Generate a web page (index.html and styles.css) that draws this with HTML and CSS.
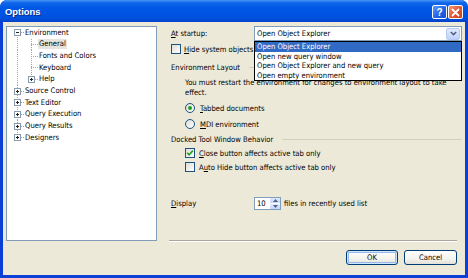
FILE: index.html
```html
<!DOCTYPE html>
<html>
<head>
<meta charset="utf-8">
<title>Options</title>
<link rel="stylesheet" href="styles.css">
</head>
<body>
<div class="window">
  <div class="titlebar">
    <span class="title">Options</span>
    <div class="caption-btns">
      <span class="cbtn help">?</span>
      <span class="cbtn close"><svg width="9" height="9" viewBox="0 0 9 9"><path d="M1.5 1.5l6 6M7.5 1.5l-6 6" stroke="#fff" stroke-width="1.8" stroke-linecap="round"/></svg></span>
    </div>
  </div>
  <div class="frame">
    <div class="main">
      <div class="tree">
        <div class="row"><span class="c first"><svg class="box" width="7" height="7" viewBox="0 0 7 7"><rect x=".5" y=".5" width="6" height="6" fill="#fff" stroke="#8c9bab"/><path d="M2 3.5h3" stroke="#222"/></svg></span><span class="lbl">Environment</span></div>
        <div class="row"><span class="c v"></span><span class="c t"></span><span class="lbl sel">General</span></div>
        <div class="row"><span class="c v"></span><span class="c t"></span><span class="lbl">Fonts and Colors</span></div>
        <div class="row"><span class="c v"></span><span class="c t"></span><span class="lbl">Keyboard</span></div>
        <div class="row"><span class="c v"></span><span class="c l"><svg class="box" width="7" height="7" viewBox="0 0 7 7"><rect x=".5" y=".5" width="6" height="6" fill="#fff" stroke="#8c9bab"/><path d="M2 3.5h3M3.5 2v3" stroke="#222"/></svg></span><span class="lbl">Help</span></div>
        <div class="row"><span class="c t"><svg class="box" width="7" height="7" viewBox="0 0 7 7"><rect x=".5" y=".5" width="6" height="6" fill="#fff" stroke="#8c9bab"/><path d="M2 3.5h3M3.5 2v3" stroke="#222"/></svg></span><span class="lbl">Source Control</span></div>
        <div class="row"><span class="c t"><svg class="box" width="7" height="7" viewBox="0 0 7 7"><rect x=".5" y=".5" width="6" height="6" fill="#fff" stroke="#8c9bab"/><path d="M2 3.5h3M3.5 2v3" stroke="#222"/></svg></span><span class="lbl">Text Editor</span></div>
        <div class="row"><span class="c t"><svg class="box" width="7" height="7" viewBox="0 0 7 7"><rect x=".5" y=".5" width="6" height="6" fill="#fff" stroke="#8c9bab"/><path d="M2 3.5h3M3.5 2v3" stroke="#222"/></svg></span><span class="lbl">Query Execution</span></div>
        <div class="row"><span class="c t"><svg class="box" width="7" height="7" viewBox="0 0 7 7"><rect x=".5" y=".5" width="6" height="6" fill="#fff" stroke="#8c9bab"/><path d="M2 3.5h3M3.5 2v3" stroke="#222"/></svg></span><span class="lbl">Query Results</span></div>
        <div class="row"><span class="c l"><svg class="box" width="7" height="7" viewBox="0 0 7 7"><rect x=".5" y=".5" width="6" height="6" fill="#fff" stroke="#8c9bab"/><path d="M2 3.5h3M3.5 2v3" stroke="#222"/></svg></span><span class="lbl">Designers</span></div>
      </div>
      <div class="pane">
        <div class="r1">
          <span class="lab"><u>A</u>t startup:</span>
          <div class="combo">
            <span class="ctext">Open Object Explorer</span>
            <span class="dd"><svg width="7" height="5" viewBox="0 0 7 5"><path d="M0.8 1l2.7 2.6L6.2 1" fill="none" stroke="#4d6185" stroke-width="1.5"/></svg></span>
            <div class="list">
              <div class="opt hi">Open Object Explorer</div>
              <div class="opt">Open new query window</div>
              <div class="opt">Open Object Explorer and new query</div>
              <div class="opt">Open empty environment</div>
            </div>
          </div>
        </div>
        <div class="line r2"><span class="chk"></span><span><u>H</u>ide system objects</span></div>
        <div class="group g1"><span>Environment Layout</span><i class="rule"></i></div>
        <p class="note">You must restart the environment for changes to environment layout to take<br>effect.</p>
        <div class="line ind rad1"><span class="radio on"></span><span><u>T</u>abbed documents</span></div>
        <div class="line ind rad2"><span class="radio"></span><span><u>M</u>DI environment</span></div>
        <div class="group g2"><span>Docked Tool Window Behavior</span><i class="rule"></i></div>
        <div class="line ind ck1"><span class="chk on"><svg width="8" height="8" viewBox="0 0 8 8"><path d="M1.2 3.8l1.9 2 3.8-4.2" fill="none" stroke="#21a121" stroke-width="1.6"/></svg></span><span><u>C</u>lose button affects active tab only</span></div>
        <div class="line ind ck2"><span class="chk"></span><span>A<u>u</u>to Hide button affects active tab only</span></div>
        <div class="disp">
          <span class="lab"><u>D</u>isplay</span>
          <div class="spin"><span class="sval">10</span><span class="sbtns"><span class="sb"><svg width="5" height="3" viewBox="0 0 5 3"><path d="M0 3L2.5 0L5 3z" fill="#4d6185"/></svg></span><span class="sb"><svg width="5" height="3" viewBox="0 0 5 3"><path d="M0 0L2.5 3L5 0z" fill="#4d6185"/></svg></span></span></div>
          <span class="after">files in recently used list</span>
        </div>
        <div class="sep"></div>
      </div>
    </div>
    <div class="buttons">
      <button class="btn default">OK</button>
      <button class="btn">Cancel</button>
    </div>
  </div>
</div>
</body>
</html>
```

FILE: styles.css
```css
* { box-sizing: border-box; }
html, body { margin: 0; padding: 0; background: #fff; }
body {
  font-family: "DejaVu Sans Condensed", "Liberation Sans", Arial, sans-serif;
  font-size: 7.6px;
  color: #000;
}
.window {
  width: 468px;
  height: 278px;
  display: flex;
  flex-direction: column;
  background: #0b3fd6;
  border-radius: 7px 7px 0 0;
  overflow: hidden;
}
.titlebar {
  height: 22px;
  flex: none;
  display: flex;
  align-items: center;
  padding: 0 5px 0 5px;
  background: linear-gradient(to bottom, #4a97f7 0%, #1268ea 12%, #0058e6 35%, #0054e3 60%, #0050dc 85%, #0340c8 100%);
}
.title {
  color: #fff;
  font-family: "Liberation Sans", Arial, sans-serif;
  font-weight: bold;
  font-size: 9.4px;
  text-shadow: 1px 1px 0 #0a2a8a;
  flex: 1;
  padding-top: 1px;
}
.caption-btns { display: flex; gap: 1px; margin-top: 2px; }
.cbtn {
  width: 15px;
  height: 14px;
  border: 1px solid #fff;
  border-radius: 2px;
  display: flex;
  align-items: center;
  justify-content: center;
  color: #fff;
  font-family: "Liberation Sans", Arial, sans-serif;
  font-weight: bold;
  font-size: 10px;
}
.help { background: linear-gradient(135deg, #5b9bff, #1e5fe6 60%, #1a50d0); }
.close { background: linear-gradient(135deg, #f09a7a, #e2552c 55%, #c8411c); }

.frame {
  flex: 1;
  margin: 0 3px 3px 3px;
  background: #ece9d8;
  display: flex;
  flex-direction: column;
}
.main {
  display: flex;
  padding: 4px 0 0 3px;
  height: 219px;
}
.tree {
  width: 151px;
  height: 215px;
  flex: none;
  background: #fff;
  border: 1px solid #7f9db9;
  padding: 0 0 0 3px;
}
.row {
  height: 11.67px;
  display: flex;
  align-items: center;
  white-space: nowrap;
}
.c {
  width: 14px;
  height: 100%;
  flex: none;
  display: flex;
  align-items: center;
  padding-left: 4px;
  background-repeat: no-repeat;
}
.box { display: block; }
.v {
  background-image: repeating-linear-gradient(to bottom, #a5a5a5 0 1px, transparent 1px 2px);
  background-size: 1px 100%;
  background-position: 7px 0;
}
.t {
  background-image: repeating-linear-gradient(to bottom, #a5a5a5 0 1px, transparent 1px 2px), repeating-linear-gradient(to right, #a5a5a5 0 1px, transparent 1px 2px);
  background-size: 1px 100%, 7px 1px;
  background-position: 7px 0, 7px 50%;
}
.l {
  background-image: repeating-linear-gradient(to bottom, #a5a5a5 0 1px, transparent 1px 2px), repeating-linear-gradient(to right, #a5a5a5 0 1px, transparent 1px 2px);
  background-size: 1px 50%, 7px 1px;
  background-position: 7px 0, 7px 50%;
}
.first {
  background-image: repeating-linear-gradient(to bottom, #a5a5a5 0 1px, transparent 1px 2px), repeating-linear-gradient(to right, #a5a5a5 0 1px, transparent 1px 2px);
  background-size: 1px 50%, 7px 1px;
  background-position: 7px 100%, 7px 50%;
}
.lbl { padding: 0 1px; line-height: 10px; }
.sel { background: #e6e4dc; }

.pane {
  width: 291px;
  margin-left: 14px;
  display: flex;
  flex-direction: column;
  white-space: nowrap;
}
.r1 { height: 15px; display: flex; align-items: center; }
.lab { width: 83px; flex: none; }
.combo {
  width: 208px;
  height: 15px;
  border: 1px solid #7f9db9;
  background: #fff;
  position: relative;
  display: flex;
  align-items: center;
  padding-left: 2px;
}
.ctext { flex: 1; }
.dd {
  width: 14px;
  height: 12px;
  margin-right: 1px;
  border-radius: 2px;
  background: linear-gradient(to bottom, #e1eafe, #c1d3fb);
  border: 1px solid #b7cbf5;
  display: flex;
  align-items: center;
  justify-content: center;
}
.list {
  position: absolute;
  left: -1px;
  top: 14px;
  width: 208px;
  border: 1px solid #000;
  background: #fff;
  z-index: 5;
}
.opt { height: 9.5px; line-height: 9.5px; padding-left: 2px; }
.opt.hi { background: #316ac5; color: #fff; }

.line { height: 14px; display: flex; align-items: center; gap: 3px; }
.r2 { margin-top: 1px; }
.ind { padding-left: 14px; }
.chk {
  width: 10px;
  height: 10px;
  flex: none;
  border: 1px solid #1c5180;
  background: linear-gradient(135deg, #dcdcd7, #fff);
  display: flex;
  align-items: center;
  justify-content: center;
}
.radio {
  width: 10px;
  height: 10px;
  flex: none;
  border-radius: 50%;
  border: 1px solid #1c5180;
  background: linear-gradient(135deg, #dcdcd7, #fff);
  display: flex;
  align-items: center;
  justify-content: center;
  margin-right: 2px;
}
.radio.on::after {
  content: "";
  width: 4px;
  height: 4px;
  border-radius: 50%;
  background: #21a121;
}
.group { display: flex; align-items: center; height: 14px; gap: 9px; }
.g1 { margin-top: 4px; }
.g2 { margin-top: 1px; }
.rule { flex: 1; height: 1px; background: #d0d0bf; }
.note { margin: 4px 0 0 0; padding-left: 14px; line-height: 10px; }
.rad1 { margin-top: 3px; }
.rad2 { margin-top: 2px; }
.ck1 { gap: 4px; }
.ck2 { gap: 4px; }

.disp { display: flex; align-items: center; height: 13px; margin-top: 23px; }
.spin {
  width: 27px;
  height: 13px;
  border: 1px solid #7f9db9;
  background: #fff;
  display: flex;
  align-items: center;
  padding-left: 2px;
}
.sval { flex: 1; }
.sbtns { display: flex; flex-direction: column; width: 10px; height: 11px; gap: 1px; }
.sb {
  flex: 1;
  background: linear-gradient(to bottom, #e1eafe, #c1d3fb);
  border-radius: 1px;
  display: flex;
  align-items: center;
  justify-content: center;
}
.after { margin-left: 3px; }
.sep {
  margin: auto 5px -1px -2px;
  height: 2px;
  border-top: 1px solid #aca899;
  border-bottom: 1px solid #fff;
}

.buttons {
  display: flex;
  justify-content: flex-end;
  gap: 6px;
  padding: 9px 8px 0 0;
}
.btn {
  font-family: "DejaVu Sans Condensed", "Liberation Sans", Arial, sans-serif;
  font-size: 7.6px;
  width: 52px;
  height: 15px;
  padding: 0;
  color: #000;
  border: 1px solid #003c74;
  border-radius: 3px;
  background: linear-gradient(to bottom, #fff 0%, #f4f3ee 60%, #e3e1d7 100%);
}
.btn:last-child { width: 53px; }
.btn.default { box-shadow: inset 0 0 0 1px #cee7ff, inset 0 0 0 2px #98b8ea; }
```
